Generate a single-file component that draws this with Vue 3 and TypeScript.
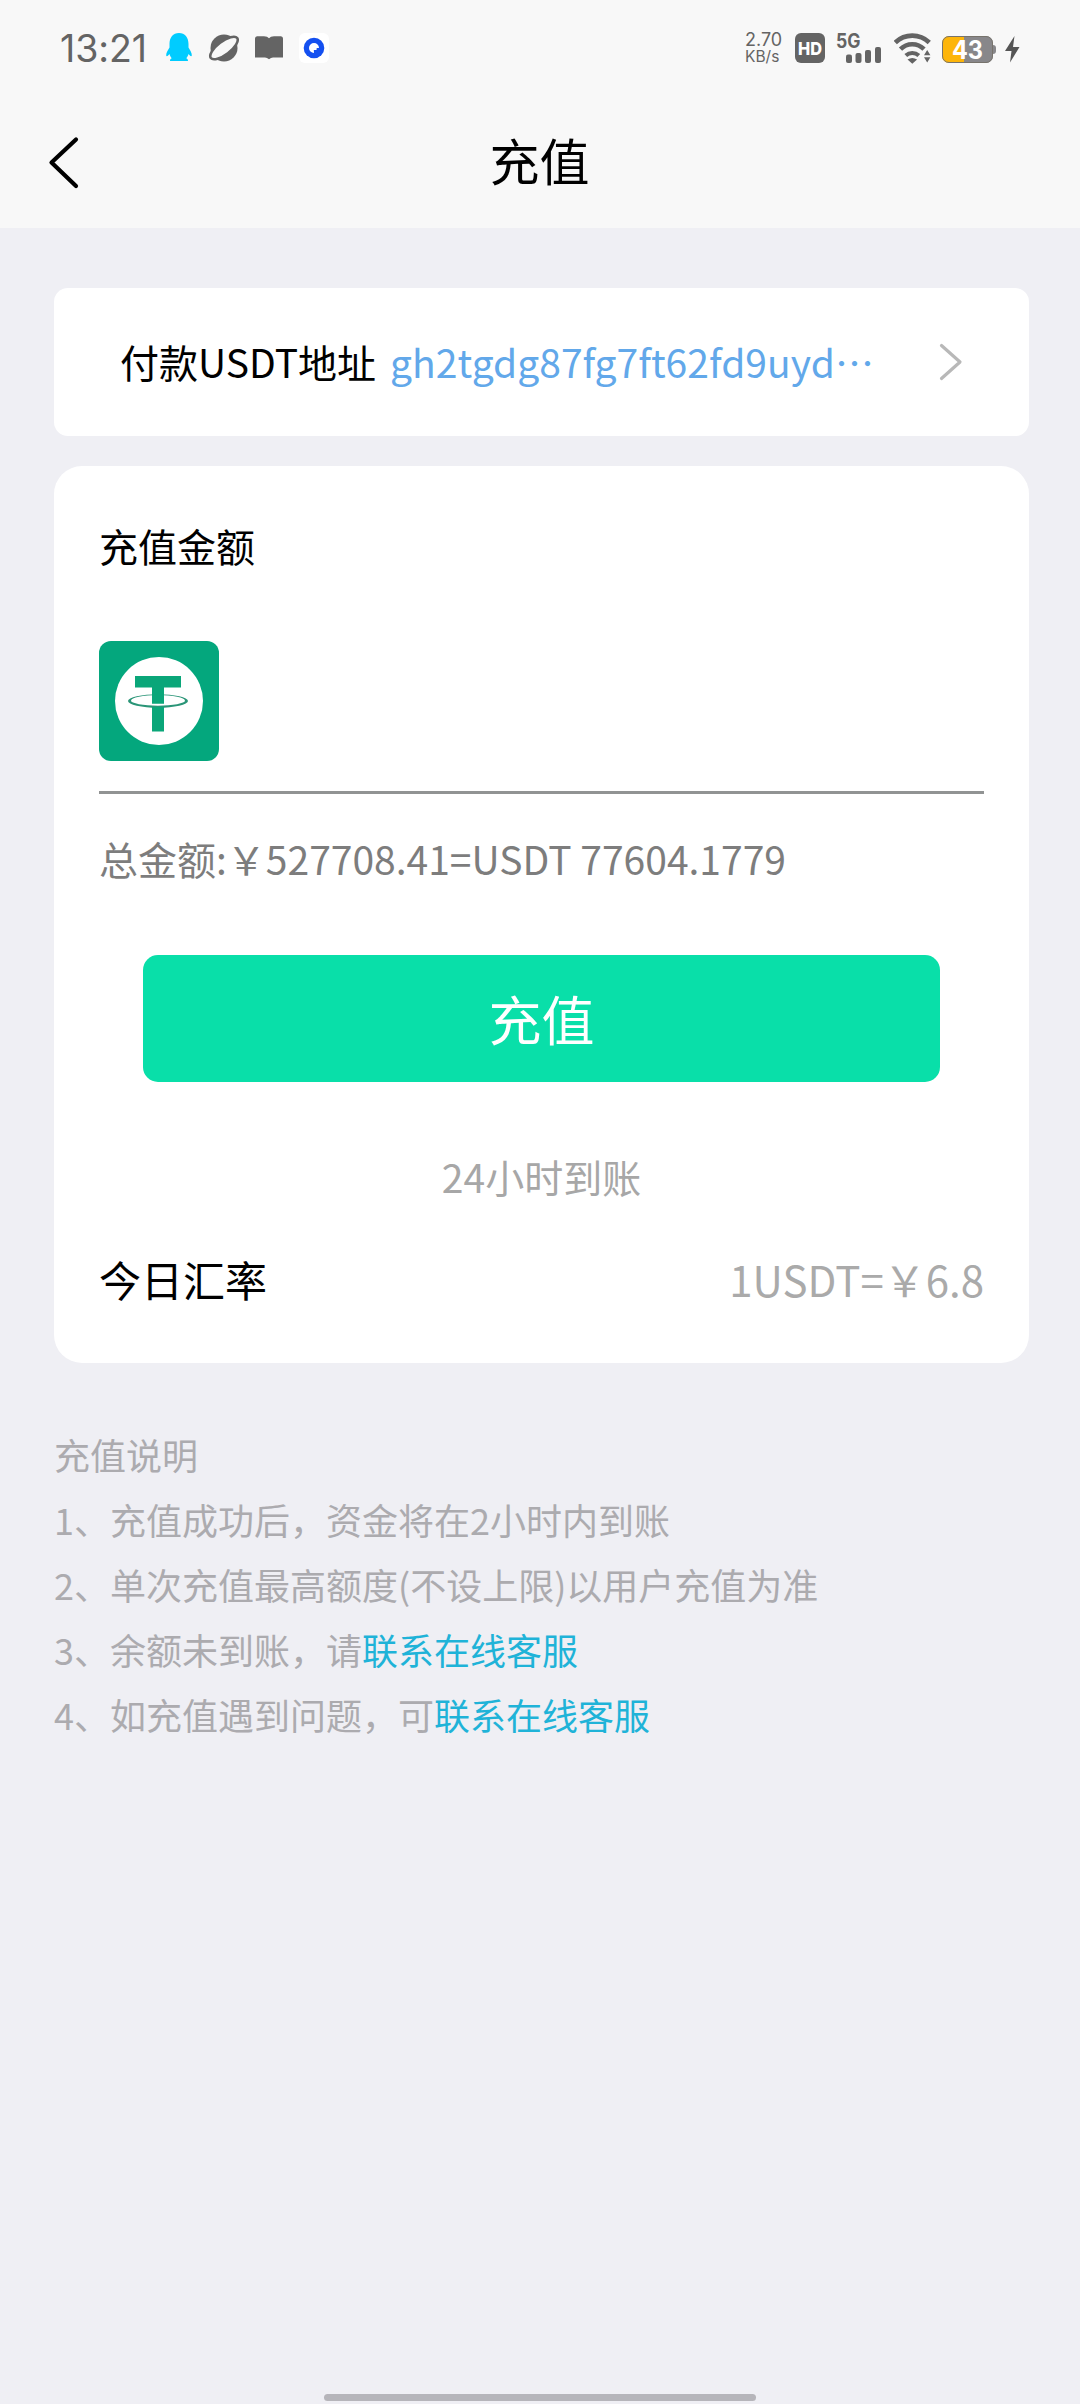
<script setup lang="ts">
interface Note {
  text: string
  link?: string
}

const address = 'gh2tgdg87fg7ft62fd9uyd…'
const total = '总金额:￥527708.41=USDT 77604.1779'
const notes: Note[] = [
  { text: '1、充值成功后，资金将在2小时内到账' },
  { text: '2、单次充值最高额度(不设上限)以用户充值为准' },
  { text: '3、余额未到账，请', link: '联系在线客服' },
  { text: '4、如充值遇到问题，可', link: '联系在线客服' },
]
</script>

<template>
  <div class="screen" lang="zh-CN">
    <header class="top">
      <div class="status">
        <span class="clock">13:21</span>
        <svg class="penguin" width="28" height="36" viewBox="165 30 28 36">
          <path fill="#0cf" d="M179 33c-6 0-9.500 4.500-9.500 11v3.500c-1.500 2.500-3.500 5.500-3.300 8 .3 1.600 2 .4 3.300-1.400.4 1.800 1.200 3 2.200 4.200-1.200.6-1.700 1.200-1.700 2.700h18c0-1.500-.5-2.100-1.700-2.700 1-1.200 1.800-2.400 2.200-4.200 1.300 1.800 3 3 3.300 1.400.2-2.500-1.800-5.500-3.300-8V44c0-6.500-3.500-11-9.500-11z" />
        </svg>
        <svg class="planet" width="32" height="36" viewBox="208 30 32 36">
          <circle cx="224" cy="48" r="13.500" fill="#646464" />
          <ellipse cx="224" cy="48" rx="16.500" ry="6.500" transform="rotate(-37 224 48)" fill="#f8f8f8" stroke="#646464" stroke-width="2.600" />
        </svg>
        <svg class="book" width="28" height="36" viewBox="255 30 28 36">
          <path fill="#646464" d="M255 38.500q0-2 2-2.300h7q3.500 0 5 2 1.500-2 5-2h7q2 .3 2 2.300V57.500h-10q-2 0-4 1.800-2-1.800-4-1.800h-10z" />
        </svg>
        <svg class="ring" width="30" height="36" viewBox="299 30 30 36">
          <rect x="299" y="33" width="30" height="30" rx="6" fill="#fff" />
          <circle cx="314" cy="48" r="10.300" fill="#1450f0" />
          <path fill="#fff" d="M319 48a5 5 0 1 0-5 5l-.2-3h2.700l.2-2z" />
        </svg>
        <div class="speed"><span>2.70</span><span class="unit">KB/s</span></div>
        <svg class="hd" width="30" height="36" viewBox="795 30 30 36">
          <rect x="795" y="33" width="30" height="30" rx="6" fill="#646464" />
          <text x="810" y="54.500" text-anchor="middle" font-size="18" textLength="24" lengthAdjust="spacingAndGlyphs" class="heavy" fill="#fff">HD</text>
        </svg>
        <svg class="signal" width="46" height="36" viewBox="836 30 46 36">
          <text x="836" y="47.500" font-size="19.500" textLength="24.500" lengthAdjust="spacingAndGlyphs" class="bold" fill="#646464">5G</text>
          <g fill="#646464">
            <rect x="846" y="54.500" width="6" height="8.500" rx="2" />
            <rect x="855.500" y="53" width="6" height="10" rx="2" />
            <rect x="865" y="50" width="6" height="13" rx="2" />
            <rect x="875" y="47" width="6" height="16" rx="2" />
          </g>
        </svg>
        <svg class="wifi" width="38" height="36" viewBox="894 30 38 36">
          <g fill="none" stroke="#646464" stroke-width="4.600">
            <path d="M895.300 42.500a24.500 24.500 0 0 1 34 0" />
            <path d="M900.500 49.200a16.500 16.500 0 0 1 23.500 0" />
            <path d="M905.800 55.500a9.500 9.500 0 0 1 13 0" stroke-width="4" />
          </g>
          <path fill="#646464" d="M907.500 59.500q4.800-3 9.600 0l-4.800 4.300zM924 55.300l3.200-5.300 3.200 5.300zM924 57.300l3.200 5.300 3.200-5.300z" />
        </svg>
        <svg class="battery" width="55" height="36" viewBox="942 30 55 36">
          <path fill="#fdb50a" d="M964 36h-15a7 7 0 0 0-7 7v13a7 7 0 0 0 7 7h15z" />
          <path fill="#88878a" d="M964 36h22a7 7 0 0 1 7 7v13a7 7 0 0 1-7 7h-22z" />
          <path fill="#88878a" d="M993 45q3 0 3 3v3q0 3-3 3z" />
          <rect x="942.500" y="36.500" width="50" height="26" rx="6.500" fill="none" stroke="#77736c" />
          <text x="967.500" y="58.500" text-anchor="middle" font-size="25" textLength="31" lengthAdjust="spacingAndGlyphs" class="bold" fill="#fff">43</text>
        </svg>
        <svg class="bolt" width="15" height="36" viewBox="1005 30 15 36">
          <path fill="#555" d="M1014.500 36l-9.500 15h6.500l-1.500 11.500 9.500-15.500h-6.500z" />
        </svg>
      </div>
      <nav class="nav">
        <svg class="back" width="34" height="56" viewBox="46 134 34 56">
          <path d="M76 139.500L51.500 162.500 76 186" fill="none" stroke="#000" stroke-width="4.200" stroke-linecap="round" stroke-linejoin="round" />
        </svg>
        <h1>充值</h1>
      </nav>
    </header>

    <main>
      <section class="card address">
        <span class="label">付款USDT地址</span>
        <span class="label value">{{ address }}</span>
        <svg width="26" height="40" viewBox="938 342 26 40">
          <path d="M941.500 345.500L960 362 941.500 378.500" fill="none" stroke="#b8b8b8" stroke-width="3.200" stroke-linecap="round" stroke-linejoin="round" />
        </svg>
      </section>

      <section class="card deposit">
        <h2>充值金额</h2>
        <div class="amount">
          <svg width="120" height="120" viewBox="0 0 120 120">
            <rect width="120" height="120" rx="12" fill="#04a77d" />
            <circle cx="60" cy="60" r="44" fill="#fff" />
            <path fill="#0aa679" d="M36 35h46v11.500H65V62.500H53V46.500H36z" />
            <path fill="#2a9577" fill-rule="evenodd" d="M29 60a30 6.800 0 0 1 60 0a30 6.800 0 0 1-60 0zM32 59.700a27 5 0 0 0 54 0a27 5.600 0 0 0-54 0z" />
            <path fill="#0aa679" d="M53 46h12v16.500H53zM53 66h12v24.500H53z" />
          </svg>
        </div>
        <p class="total">{{ total }}</p>
        <button type="button">充值</button>
        <p class="arrival">24小时到账</p>
        <div class="rate">
          <span>今日汇率</span>
          <span class="rate-value">1USDT=￥6.8</span>
        </div>
      </section>

      <section class="notes">
        <p>充值说明</p>
        <p v-for="note in notes" :key="note.text">{{ note.text }}<a v-if="note.link">{{ note.link }}</a></p>
      </section>
    </main>

    <div class="home-bar"></div>
  </div>
</template>

<style>
body {
  margin: 0;
  background: #efeff4;
}
</style>

<style scoped>
.screen {
  display: flex;
  flex-direction: column;
  width: 1080px;
  height: 2404px;
  overflow: hidden;
  background: #efeff4;
  color: #000;
  font-family: "Noto Sans CJK SC", sans-serif;
}
h1, h2, p {
  margin: 0;
  font-weight: 400;
}
svg {
  display: block;
  flex: none;
}
.top {
  height: 228px;
  background: #f8f8f8;
}
.status {
  display: flex;
  align-items: center;
  height: 96px;
  padding-left: 60px;
  color: #646464;
  font-family: Inter, sans-serif;
}
.clock {
  width: 105px;
  font-size: 37.500px;
  letter-spacing: -0.1px;
  white-space: nowrap;
}
.planet { margin-left: 15px; }
.book { margin-left: 15px; }
.ring { margin-left: 16px; }
.speed {
  display: flex;
  flex-direction: column;
  width: 50px;
  margin-left: 416px;
  font-size: 18px;
  line-height: 17px;
  white-space: nowrap;
}
.unit { font-size: 15.500px; }
.signal { margin-left: 11px; }
.wifi { margin-left: 12px; }
.battery { margin-left: 10px; }
.bolt { margin-left: 8px; }
.bold {
  font-family: Inter, sans-serif;
  font-weight: 700;
}
.heavy {
  font-family: Inter, sans-serif;
  font-weight: 800;
}
.nav {
  display: flex;
  align-items: center;
  height: 132px;
  padding: 0 46px;
}
.nav h1 {
  flex: 1;
  height: 132px;
  margin-right: 35px;
  font-size: 50px;
  line-height: 126px;
  text-align: center;
}
main {
  display: flex;
  flex: 1;
  flex-direction: column;
  padding: 60px 51px 0 54px;
}
.card {
  background: #fff;
}
.address {
  display: flex;
  align-items: center;
  height: 148px;
  padding: 0 65px 0 66px;
  border-radius: 14px;
  font-size: 39px;
  white-space: nowrap;
}
.label {
  height: 148px;
  line-height: 147px;
}
.value {
  flex: 1;
  margin-left: 14px;
  color: #62a8ea;
}
.deposit {
  display: flex;
  flex-direction: column;
  height: 897px;
  margin-top: 30px;
  padding: 0 45px;
  box-sizing: border-box;
  border-radius: 28px;
}
.deposit h2 {
  height: 175px;
  font-size: 39px;
  line-height: 158px;
}
.amount {
  height: 150px;
  border-bottom: 3px solid #919393;
}
.total {
  height: 161px;
  color: #7d7d7d;
  font-size: 39px;
  line-height: 129px;
  white-space: nowrap;
}
button {
  display: block;
  height: 127px;
  margin: 0 44px;
  padding: 0;
  border: 0;
  border-radius: 15px;
  background: #09dfa9;
  color: #fff;
  font: 400 53px/127px "Noto Sans CJK SC", sans-serif;
}
.arrival {
  height: 150px;
  color: #a7a7a7;
  font-size: 39px;
  line-height: 188px;
  text-align: center;
}
.rate {
  display: flex;
  justify-content: space-between;
  font-size: 42px;
  line-height: 94px;
}
.rate-value { color: #aaa; }
.notes {
  margin-top: 59px;
  color: #acabaf;
  font-size: 36px;
  line-height: 65px;
  white-space: nowrap;
}
.notes a { color: #1fb3d8; }
.home-bar {
  flex: none;
  width: 432px;
  height: 7px;
  margin: 0 auto 3px;
  border-radius: 4px;
  background: #b6b5ba;
}
</style>
